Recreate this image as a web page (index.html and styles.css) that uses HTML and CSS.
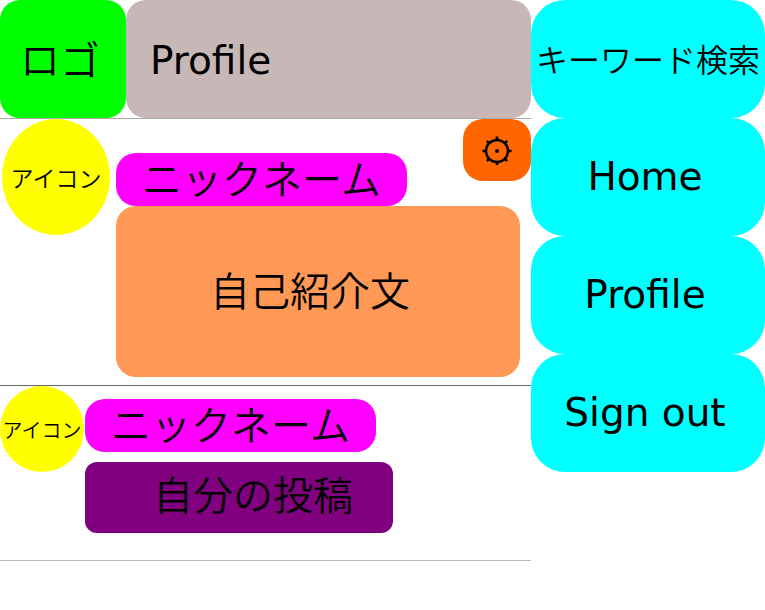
FILE: index.html
```html
<!DOCTYPE html>
<html lang="ja">
<head>
<meta charset="utf-8">
<meta name="viewport" content="width=device-width, initial-scale=1">
<title>Profile</title>
<link rel="stylesheet" href="styles.css">
</head>
<body>
<div class="layout">
  <main class="main">
    <header class="header">
      <a class="logo" href="#">ロゴ</a>
      <h1 class="title">Profile</h1>
    </header>
    <section class="profile">
      <div class="avatar avatar-large">アイコン</div>
      <div class="profile-body">
        <div class="profile-top">
          <h2 class="nickname">ニックネーム</h2>
          <button class="settings" type="button" aria-label="設定">
            <svg class="gear" viewBox="0 0 30 30" aria-hidden="true">
              <circle cx="15" cy="16" r="11" fill="none" stroke="#000" stroke-width="2.4"/>
              <circle cx="15" cy="16" r="2" fill="#000"/>
              <path d="M15 1.500V5M15 27v3M.5 16H4M26 16h3.500M4.800 5.800l2.400 2.400M22.800 23.800l2.400 2.400M25.200 5.800l-2.400 2.400M7.200 23.800l-2.400 2.400" stroke="#000" stroke-width="2.600"/>
            </svg>
          </button>
        </div>
        <p class="bio">自己紹介文</p>
      </div>
    </section>
    <article class="post">
      <div class="avatar avatar-small">アイコン</div>
      <div class="post-body">
        <h2 class="nickname">ニックネーム</h2>
        <p class="post-text">自分の投稿</p>
      </div>
    </article>
  </main>
  <nav class="side">
    <input class="side-item search" type="search" placeholder="キーワード検索" aria-label="キーワード検索">
    <a class="side-item" href="#">Home</a>
    <a class="side-item" href="#">Profile</a>
    <a class="side-item" href="#">Sign out</a>
  </nav>
</div>
</body>
</html>
```
FILE: styles.css
```css
* {
  box-sizing: border-box;
}

body {
  margin: 0;
  background: #fff;
  color: #000;
  font-family: "DejaVu Sans", "Noto Sans CJK JP", sans-serif;
  font-size: 40px;
  font-weight: 400;
  line-height: 48px;
}

h1, h2, p {
  margin: 0;
  font-size: inherit;
  font-weight: inherit;
}

a {
  color: inherit;
  text-decoration: none;
}

.logo, .avatar, .nickname, .bio, .post-text, .search {
  font-family: "DejaVu Sans", "Noto Sans CJK JP DemiLight", "Noto Sans CJK JP", sans-serif;
  font-weight: 350;
}

.layout {
  display: grid;
  grid-template-columns: 531fr 234fr;
  align-items: start;
}

.header {
  display: flex;
  height: 118px;
}

.logo, .title {
  display: flex;
  align-items: center;
  padding-top: 4px;
  border-radius: 20px;
}

.logo {
  flex: 0 0 126px;
  justify-content: center;
  padding-right: 6px;
  background: #0f0;
}

.title {
  flex: 1;
  padding-left: 24px;
  background: #c8b7b7;
  font-size: 39px;
}

.profile {
  display: flex;
  gap: 6px;
  padding: 0 0 8px 2px;
  border-top: 1px solid #aaa;
}

.avatar {
  display: flex;
  flex: none;
  align-items: center;
  justify-content: center;
  padding-top: 4px;
  border-radius: 50%;
  background: #ff0;
  white-space: nowrap;
}

.avatar-large {
  width: 108px;
  height: 116px;
  font-size: 23px;
}

.avatar-small {
  width: 84px;
  height: 86px;
  font-size: 20px;
}

.profile-body {
  flex: 1;
}

.profile-top {
  display: flex;
  align-items: flex-end;
  justify-content: space-between;
  height: 87px;
}

.nickname {
  display: flex;
  align-items: center;
  justify-content: center;
  width: 291px;
  height: 53px;
  border-radius: 20px;
  background: #f0f;
}

.settings {
  display: flex;
  align-self: flex-start;
  align-items: center;
  justify-content: center;
  width: 68px;
  height: 62px;
  padding: 0;
  border: 0;
  border-radius: 20px;
  background: #f60;
}

.gear {
  width: 30px;
  height: 30px;
}

.bio {
  display: flex;
  align-items: center;
  justify-content: center;
  height: 171px;
  margin-right: 11px;
  padding-right: 16px;
  border-radius: 20px;
  background: #f95;
}

.post {
  display: flex;
  height: 176px;
  border-top: 1px solid #666;
  border-bottom: 1px solid #bbb;
}

.post-body {
  display: flex;
  flex-direction: column;
  gap: 10px;
  padding: 13px 0 0 1px;
}

.post-text {
  display: flex;
  align-items: center;
  justify-content: center;
  width: 308px;
  height: 71px;
  padding: 0 0 4px 28px;
  border-radius: 12px;
  background: #800080;
}

.side {
  display: flex;
  flex-direction: column;
}

.side-item {
  display: flex;
  align-items: center;
  justify-content: center;
  width: 100%;
  height: 118px;
  padding: 0 8px 0 2px;
  border: 0;
  border-radius: 34px;
  background: #0ff;
  color: #000;
  font-size: 39px;
}

.search {
  appearance: none;
  padding: 4px 4px 0;
  font-size: 32px;
  text-align: center;
}

.search::placeholder {
  color: #000;
  opacity: 1;
}

.search::-webkit-search-cancel-button {
  display: none;
}
```
